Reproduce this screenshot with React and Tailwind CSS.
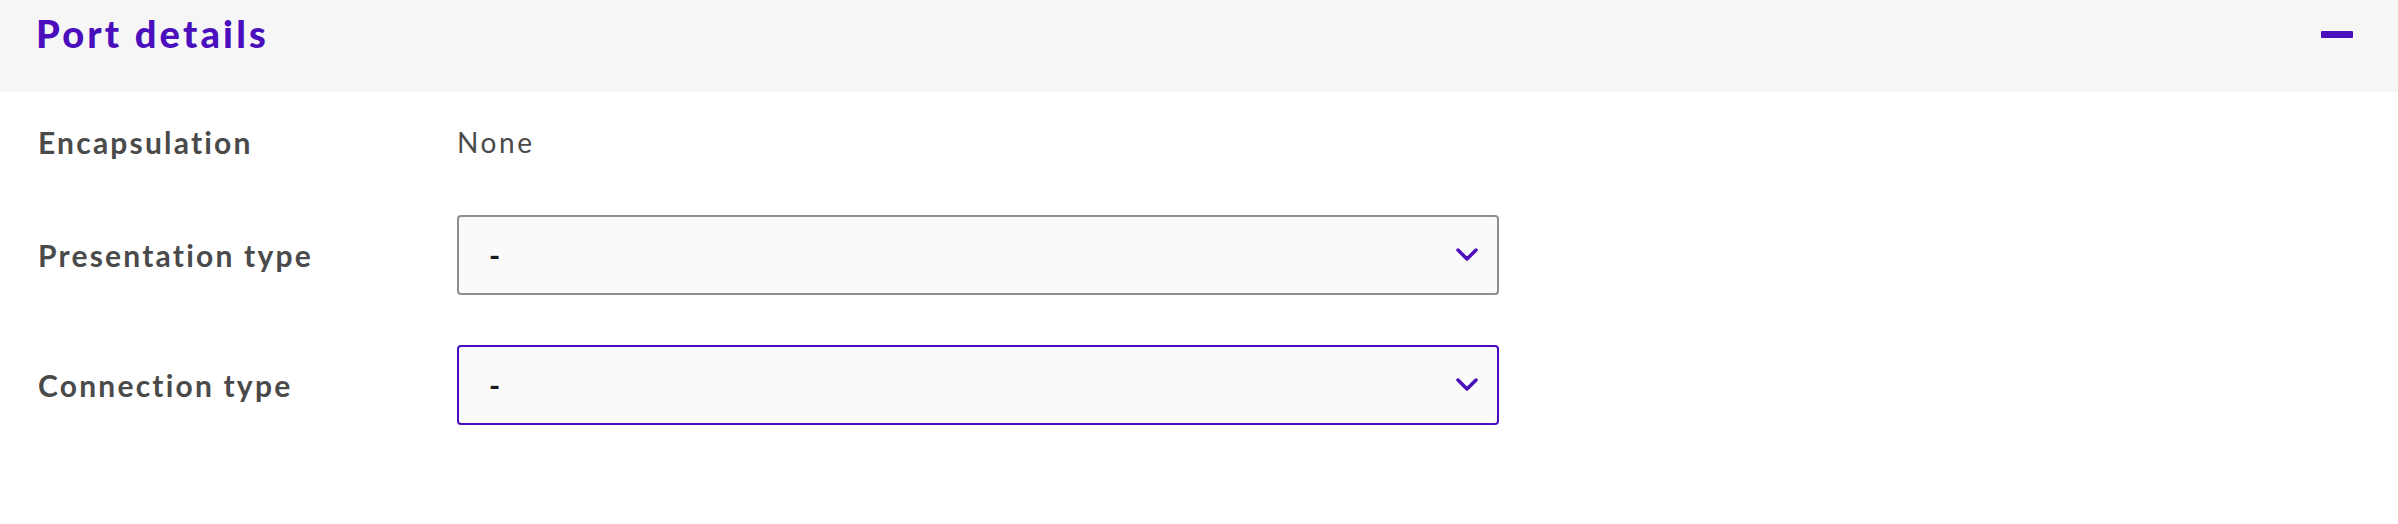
import React from 'react';

const Chevron = () => (
    <svg width="22" height="14" viewBox="0 0 22 14" fill="none" className="shrink-0">
        <polyline points="2,2 11,11 20,2" stroke="#4a0ebd" strokeWidth="3.5" strokeLinecap="round" strokeLinejoin="round" />
    </svg>
);

const Select = ({ active }) => (
    <div
        className={`w-[1042px] h-[80px] rounded-[4px] bg-[#fafafa] border-2 flex items-center justify-between pl-[30px] pr-[19px] ${active ? 'border-[#4a0ebd]' : 'border-[#8e8e8e]'}`}
    >
        <span className="text-[30px] font-bold leading-[40px] text-[#1a1a1a]">-</span>
        <Chevron />
    </div>
);

const Row = ({ label, children, className = '' }) => (
    <div className={`flex items-center ${className}`}>
        <div className="w-[419px] text-[30px] leading-[40px] font-bold tracking-[2.2px] text-[#4a4a4a]">{label}</div>
        {children}
    </div>
);

export default function App() {
    return (
        <div className="w-full h-[524px] bg-white font-['Lato',sans-serif]">
            {/* HEADER */}
            <div className="h-[92px] bg-[#f6f6f6] flex items-start justify-between pl-[36px] pr-[45px]">
                <h2 className="pt-[14px] text-[38px] font-black tracking-[3.2px] text-[#4a0ebd] leading-none">Port details</h2>
                <div className="mt-[31px] w-[32px] h-[7px] rounded-[1px] bg-[#4a0ebd]"></div>
            </div>

            {/* BODY */}
            <div className="pl-[38px] pt-[30px] flex flex-col">
                <Row label="Encapsulation" className="h-[40px]">
                    <span className="text-[28px] leading-[40px] tracking-[2.6px] text-[#4a4a4a]">None</span>
                </Row>
                <Row label="Presentation type" className="mt-[53px]">
                    <Select />
                </Row>
                <Row label="Connection type" className="mt-[50px]">
                    <Select active />
                </Row>
            </div>
        </div>
    );
}
